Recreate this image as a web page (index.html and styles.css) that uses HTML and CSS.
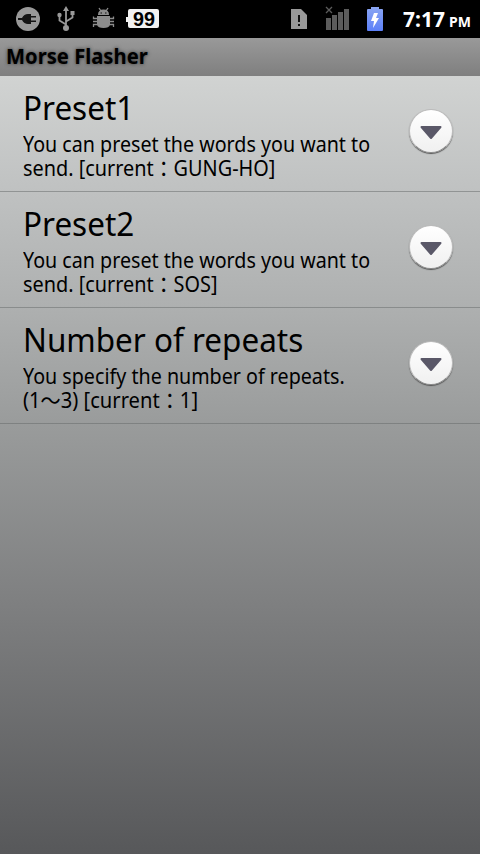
FILE: index.html
```html
<!DOCTYPE html>
<html lang="en">
<head>
<meta charset="utf-8">
<title>Morse Flasher</title>
<link rel="stylesheet" href="styles.css">
</head>
<body>
<header class="status">
  <svg class="status-icons" width="400" height="38" viewBox="0 0 400 38">
    <circle cx="28" cy="19" r="12" fill="#999"/>
    <path d="M18 18h4q2-4 6-4h3v2h5v1.500h-5v3h5V22h-5v2h-3q-4 0-6-4h-4z" fill="#151515"/>
    <path d="M66 28V9M66 24.500l-6.500-4V15M66 21.500l6.500-4V13" fill="none" stroke="#999" stroke-width="1.800"/>
    <path d="M66 6l3 5h-6zM70.500 11h4v4h-4z" fill="#999"/><circle cx="59.500" cy="15" r="2.200" fill="#999"/><circle cx="66" cy="28" r="3" fill="#999"/>
    <path d="M98 15q0-5.500 5.500-5.500t5.500 5.500zM97 16h13v9q-1 3-6.500 3t-6.500-3z" fill="#8c8c8c"/>
    <path d="M101 11l-2-3M106 11l2-3M97 18.500h-3.500V16.500M97 21.500h-4M97 24.500h-3.500v2.500M110 18.500h3.500V16.500M110 21.500h4M110 24.500h3.500v2.500" fill="none" stroke="#8c8c8c" stroke-width="1.300"/>
    <path d="M100.500 13h1.500M105 13h1.500" stroke="#111" stroke-width="1"/>
    <path d="M130 9h27q2 0 2 2v15q0 2-2 2h-27q-2 0-2-2v-4h-2v-5h2v-6q0-2 2-2z" fill="#f2f2f2"/>
    <path d="M291 9h10l6 6v14h-16z" fill="#999"/>
    <path d="M298 15h2v7h-2zM298 24h2v2h-2z" fill="#111"/>
    <path d="M326 18h5v12h-5zM332 15h5v15h-5zM338 12h5v18h-5zM344 9h5v21h-5z" fill="#5c5c5c"/>
    <path d="M326 7l6 6M332 7l-6 6" stroke="#5c5c5c" stroke-width="1.300"/>
    <defs><linearGradient id="cell" x2="0" y2="1"><stop stop-color="#8ba6f2"/><stop offset="1" stop-color="#5c80f8"/></linearGradient></defs>
    <path d="M368 9h3V7h8v2h3q1 0 1 1v20q0 1-1 1h-14q-1 0-1-1V10q0-1 1-1z" fill="url(#cell)"/>
    <path d="M374 13h4l-2 5h3l-6 10 1-7h-3z" fill="#fff"/>
    <text x="133" y="26" class="level" textLength="22" lengthAdjust="spacingAndGlyphs">99</text>
  </svg>
  <div class="clock"><span class="time">7:17</span><span class="ampm">PM</span></div>
</header>
<div class="titlebar"><h1>Morse Flasher</h1></div>
<main>
  <section class="row">
    <div class="copy"><h2>Preset1</h2><p><span>You can preset the words you want to</span><span class="current">send. [current：GUNG-HO]</span></p></div>
    <button class="more" aria-label="Open"><svg width="22" height="15" viewBox="0 0 22 15"><path d="M1.500 2h19L11 13z"/></svg></button>
  </section>
  <section class="row">
    <div class="copy"><h2>Preset2</h2><p><span>You can preset the words you want to</span><span class="current">send. [current：SOS]</span></p></div>
    <button class="more" aria-label="Open"><svg width="22" height="15" viewBox="0 0 22 15"><path d="M1.500 2h19L11 13z"/></svg></button>
  </section>
  <section class="row">
    <div class="copy"><h2>Number of repeats</h2><p><span>You specify the number of repeats.</span><span class="range">(1～3) [current：1]</span></p></div>
    <button class="more" aria-label="Open"><svg width="22" height="15" viewBox="0 0 22 15"><path d="M1.500 2h19L11 13z"/></svg></button>
  </section>
</main>
</body>
</html>
```
FILE: styles.css
```css
* { box-sizing: border-box; }
body { margin: 0; height: 854px; overflow: hidden; display: flex; flex-direction: column; font-family: "Noto Sans", "Noto Sans CJK JP", sans-serif; color: #000; }
h1, h2, p { margin: 0; white-space: nowrap; transform-origin: left center; }
.status { height: 38px; flex: none; display: flex; background: #000; color: #fff; }
.status-icons { flex: none; }
.level { font: bold 20px "Liberation Sans", sans-serif; fill: #000; }
.clock { display: flex; align-items: baseline; gap: 4px; padding: 0 0 0 3px; line-height: 38px; font-weight: 700; white-space: nowrap; }
.time { font-size: 21px; }
.ampm { font-size: 14px; }
.titlebar { height: 38px; flex: none; padding-left: 6px; background: linear-gradient(#999, #7f7f7f); }
h1 { width: max-content; font-size: 21px; line-height: 37px; font-weight: 700; text-shadow: 0 0 4px #333; transform: scaleX(.962); }
main { flex: 1; background: linear-gradient(#d1d3d2 0, #c0c2c2 110px, #aeb0b0 230px, #999b9b 350px, #7e7f80 530px, #57585a 778px); }
.row { height: 116px; display: flex; justify-content: space-between; padding: 13px 27px 0 23px; border-bottom: 1px solid rgba(100,104,104,.5); }
h2 { width: max-content; font-size: 33px; line-height: 38px; font-weight: 400; transform: scaleX(.953); }
p { margin-top: 5px; font-size: 21px; line-height: 24px; }
p span { display: block; height: 24px; width: max-content; transform-origin: left center; transform: scaleX(.937); }
p .current { transform: scaleX(.946); }
p .range { transform: scaleX(.96); }
.copy { width: 350px; }
.more { width: 44px; height: 44px; margin-top: 20px; padding: 2px 0 0; border: 1px solid #bbb; border-bottom-color: #888; border-radius: 50%; background: linear-gradient(#fff, #f0f0f0); box-shadow: 0 1px 1px #555; display: flex; align-items: center; justify-content: center; }
.more path { fill: #5a5868; stroke: #5a5868; stroke-width: 2; stroke-linejoin: round; }
```
